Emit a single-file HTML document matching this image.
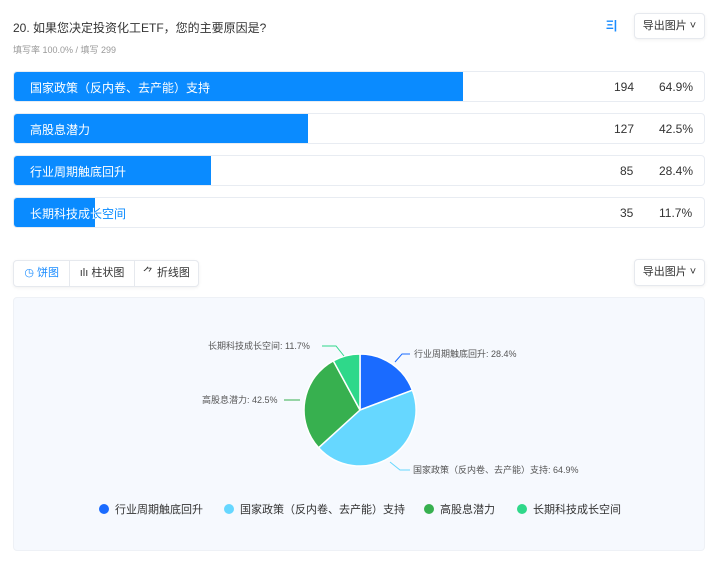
<!DOCTYPE html><html><head><meta charset="utf-8"><style>
body{margin:0;width:720px;height:571px;background:#fff;font-family:"Liberation Sans","Noto Sans CJK SC",sans-serif;position:relative;overflow:hidden}
.a{position:absolute}
.row{position:absolute;left:13px;width:690px;height:29px;border:1px solid #e8ecf2;border-radius:4px;background:#fff;overflow:hidden}
.fill{position:absolute;left:0;top:0;bottom:0;background:#0a8bff;overflow:hidden}
.lab{position:absolute;left:16px;top:7px;font-size:12px;color:#fff;white-space:nowrap}
.lab.b{color:#0a8bff}
.n{position:absolute;top:8px;font-size:12px;color:#333}
.btn{position:absolute;border:1px solid #e6e9ee;border-radius:4px;background:#fff;font-size:11px;color:#333;box-shadow:0 1px 3px rgba(0,0,0,.06)}
</style></head><body>
<div class="a" style="left:13px;top:19px;font-size:12px;color:#333">20. 如果您决定投资化工ETF，您的主要原因是?</div>
<div class="a" style="left:13px;top:43px;font-size:9px;color:#999">填写率 100.0% / 填写 299</div>
<div class="a" style="left:606px;top:18px;font-size:12px;color:#1a8cff;font-weight:bold">Ξ|</div>
<div class="btn" style="left:634px;top:13px;width:69px;height:24px;line-height:24px;text-align:center">导出图片 ˅</div>

<div class="row" style="top:71px"><div class="fill" style="width:449px"><div class="lab">国家政策（反内卷、去产能）支持</div></div><div class="n" style="left:600px">194</div><div class="n" style="left:645px">64.9%</div></div>
<div class="row" style="top:113px"><div class="fill" style="width:294px"><div class="lab">高股息潜力</div></div><div class="n" style="left:600px">127</div><div class="n" style="left:645px">42.5%</div></div>
<div class="row" style="top:155px"><div class="fill" style="width:197px"><div class="lab">行业周期触底回升</div></div><div class="n" style="left:606px">85</div><div class="n" style="left:645px">28.4%</div></div>
<div class="row" style="top:197px"><div class="lab b">长期科技成长空间</div><div class="fill" style="width:81px"><div class="lab">长期科技成长空间</div></div><div class="n" style="left:606px">35</div><div class="n" style="left:645px">11.7%</div></div>

<div class="btn" style="left:13px;top:260px;width:184px;height:25px;display:flex;line-height:25px">
<div style="width:56px;text-align:center;color:#1a8cff;border-right:1px solid #e6e9ee">◷ 饼图</div>
<div style="width:64px;text-align:center;border-right:1px solid #e6e9ee">ılı 柱状图</div>
<div style="width:64px;text-align:center">⺈ 折线图</div></div>
<div class="btn" style="left:634px;top:259px;width:69px;height:25px;line-height:25px;text-align:center">导出图片 ˅</div>

<div class="a" style="left:13px;top:297px;width:690px;height:252px;background:#f6f9fe;border:1px solid #eef1f6;border-radius:4px"></div>
<svg class="a" style="left:0;top:0" width="720" height="571">
<g stroke="#fff" stroke-width="1.5">
<path d="M360 410 L360 354 A56 56 0 0 1 412.4 390.2Z" fill="#1a6bff"/>
<path d="M360 410 L412.4 390.2 A56 56 0 0 1 318.6 447.7Z" fill="#66d7ff"/>
<path d="M360 410 L318.6 447.7 A56 56 0 0 1 333.3 360.8Z" fill="#37b04f"/>
<path d="M360 410 L333.3 360.8 A56 56 0 0 1 360 354Z" fill="#2fd88a"/>
</g>
<g fill="none" stroke-width="1">
<path d="M395 362 L402 354 L410 354" stroke="#1a6bff"/>
<path d="M390 462 L400 470 L410 470" stroke="#66d7ff"/>
<path d="M300 400 L292 400 L284 400" stroke="#37b04f"/>
<path d="M344 356 L336 346 L322 346" stroke="#2fd88a"/>
</g>
<g font-size="9" fill="#555" font-family="Liberation Sans,Noto Sans CJK SC,sans-serif">
<text x="414" y="357">行业周期触底回升: 28.4%</text>
<text x="413" y="473">国家政策（反内卷、去产能）支持: 64.9%</text>
<text x="202" y="403">高股息潜力: 42.5%</text>
<text x="208" y="349">长期科技成长空间: 11.7%</text>
</g>
<g font-size="11" fill="#333" font-family="Liberation Sans,Noto Sans CJK SC,sans-serif">
<circle cx="104" cy="509" r="5" fill="#1a6bff"/><text x="115" y="513">行业周期触底回升</text>
<circle cx="229" cy="509" r="5" fill="#66d7ff"/><text x="240" y="513">国家政策（反内卷、去产能）支持</text>
<circle cx="429" cy="509" r="5" fill="#37b04f"/><text x="440" y="513">高股息潜力</text>
<circle cx="522" cy="509" r="5" fill="#2fd88a"/><text x="533" y="513">长期科技成长空间</text>
</g>
</svg>
</body></html>
